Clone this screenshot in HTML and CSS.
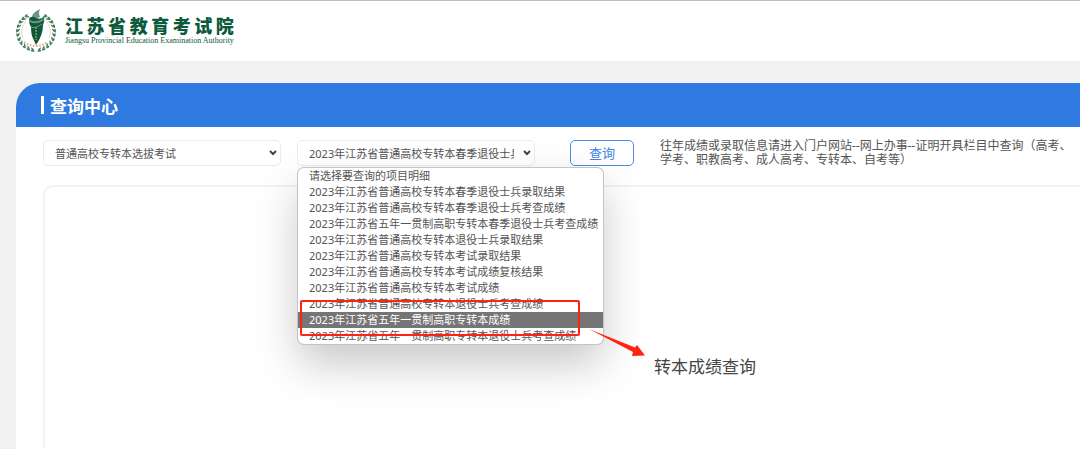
FILE: index.html
```html
<!DOCTYPE html>
<html lang="zh-CN">
  <head>
    <meta charset="UTF-8" />
    <meta name="viewport" content="width=device-width, initial-scale=1.0" />
    <title>江苏省教育考试院 - 查询中心</title>
    <link rel="stylesheet" href="styles.css">
  </head>
  <body>
    <header class="header">
      <svg class="logo" viewBox="0 0 42 46" aria-hidden="true">
        <defs>
          <g id="leaf" fill="#3f7a60">
            <path d="M21 43.500q-2.600-2.800-4.200-.4q1.800 1.600 4.200.4z" />
            <path d="M21 43.200q-1.400-3-4-3.600q.4 3 4 3.600z" />
          </g>
          <g id="branch">
            <use href="#leaf" transform="rotate(4 21 24)" />
            <use href="#leaf" transform="rotate(18 21 24)" />
            <use href="#leaf" transform="rotate(32 21 24)" />
            <use href="#leaf" transform="rotate(46 21 24)" />
            <use href="#leaf" transform="rotate(60 21 24)" />
            <use href="#leaf" transform="rotate(74 21 24)" />
            <use href="#leaf" transform="rotate(88 21 24)" />
            <use href="#leaf" transform="rotate(102 21 24)" />
            <use href="#leaf" transform="rotate(116 21 24)" />
            <use href="#leaf" transform="rotate(130 21 24)" />
            <use href="#leaf" transform="rotate(143 21 24)" />
          </g>
        </defs>
        <use href="#branch" />
        <use href="#branch" transform="translate(42 0) scale(-1 1)" />
        <path d="M11 13a15 15 0 0 0-3 17M31 13a15 15 0 0 1 3 17" fill="none" stroke="#f0c9a4" stroke-width=".8" />
        <path d="M9 34q12 8 24 0" fill="none" stroke="#e2a06a" stroke-width="1.800" stroke-dasharray="1.600 1.600" />
        <path d="M17 9q0-4 8-8q-2 4 0 8l-4 2z" fill="#6f9483" />
        <path d="M14 11q2-4 7-1q4 2 8-1q1 4-1 8q0 10-7 20l-4-9q-1-4-1-9q-2-3-2-8z" fill="#0b5a3c" />
        <path d="M14 11q5 5 15-1q0 2-1 3q-7 4-13 1z" fill="#6f9483" />
        <path d="M16 19q4 2 11-3" fill="none" stroke="#6f9483" stroke-width="1" />
        <path d="M21 19v13" stroke="#b98d4c" stroke-width="1.500" stroke-dasharray="2 1" />
      </svg>
      <div class="brand">
        <div class="brand-name">江苏省教育考试院</div>
        <div class="brand-en">Jiangsu Provincial Education Examination Authority</div>
      </div>
    </header>

    <main class="panel">
      <h1 class="panel-title">查询中心</h1>

      <form class="toolbar">
        <select class="select" aria-label="考试类别">
          <option>普通高校专转本选拔考试</option>
        </select>

        <div class="picker">
          <select class="select" aria-label="项目明细">
            <option>2023年江苏省普通高校专转本春季退役士兵考查成绩</option>
          </select>
          <ul class="menu" role="listbox" aria-label="项目明细">
            <li role="option">请选择要查询的项目明细</li>
            <li role="option">2023年江苏省普通高校专转本春季退役士兵录取结果</li>
            <li role="option">2023年江苏省普通高校专转本春季退役士兵考查成绩</li>
            <li role="option">2023年江苏省五年一贯制高职专转本春季退役士兵考查成绩</li>
            <li role="option">2023年江苏省普通高校专转本退役士兵录取结果</li>
            <li role="option">2023年江苏省普通高校专转本考试录取结果</li>
            <li role="option">2023年江苏省普通高校专转本考试成绩复核结果</li>
            <li role="option">2023年江苏省普通高校专转本考试成绩</li>
            <li role="option">2023年江苏省普通高校专转本退役士兵考查成绩</li>
            <li role="option" class="active" aria-selected="true">2023年江苏省五年一贯制高职专转本成绩</li>
            <li role="option">2023年江苏省五年一贯制高职专转本退役士兵考查成绩</li>
          </ul>

          <!-- 标注 -->
          <div class="mark"></div>
          <svg class="arrow" viewBox="0 0 56 28" aria-hidden="true">
            <path d="M0 0L46 18.500L48 16L56 26.500L43 27L44 23Z" fill="#ff2412" />
          </svg>
          <div class="caption">转本成绩查询</div>
        </div>

        <button type="button" class="query-btn">查询</button>
        <p class="note">往年成绩或录取信息请进入门户网站--网上办事--证明开具栏目中查询（高考、学考、职教高考、成人高考、专转本、自考等）</p>
      </form>

      <section class="result"></section>
    </main>
  </body>
</html>
```
FILE: styles.css
```css
* {
  box-sizing: border-box;
}
body {
  margin: 0;
  min-height: 100vh;
  display: flex;
  flex-direction: column;
  background-color: #f1f1f1;
  color: #555;
  font-family: "Noto Sans", "Noto Sans CJK SC", sans-serif;
  font-size: 11px;
}

.header {
  display: flex;
  align-items: center;
  gap: 8px;
  height: 61px;
  padding: 0 15px;
  border-top: 1px solid #c8bcbc;
  background-color: #fff;
}
.logo {
  width: 42px;
  height: 46px;
}
.brand {
  color: #0b5a3c;
}
.brand-name {
  font-size: 18px;
  font-weight: 900;
  line-height: 20px;
  text-align-last: justify;
}
.brand-en {
  font-family: "Liberation Serif", serif;
  font-size: 8px;
  line-height: 10px;
}

.panel {
  flex: 1;
  display: flex;
  flex-direction: column;
  margin: 22px 0 0 16px;
  border-top-left-radius: 24px;
  background-color: #fff;
}
.panel-title {
  display: flex;
  align-items: center;
  gap: 6px;
  margin: 0;
  padding: 0 25px;
  height: 44px;
  border-top-left-radius: 24px;
  background-color: #2f7ae0;
  color: #fff;
  font-size: 17px;
}
.panel-title::before {
  content: "";
  width: 3px;
  height: 18px;
  background-color: #fff;
}

.toolbar {
  display: flex;
  align-items: center;
  padding: 12px 0 0 27px;
}
.select {
  flex: none;
  display: block;
  width: 238px;
  height: 26px;
  padding: 0 20px 0 11px;
  border: 1px solid #ebebeb;
  border-radius: 5px;
  appearance: none;
  background: #fff url("data:image/svg+xml,%3Csvg xmlns='http://www.w3.org/2000/svg' width='8' height='6'%3E%3Cpath d='M1 1l3 3 3-3' fill='none' stroke='%23444' stroke-width='2'/%3E%3C/svg%3E") no-repeat right 3px center;
  color: #555;
  font-family: inherit;
  font-size: 11px;
}
.picker {
  flex: none;
  position: relative;
  margin-left: 16px;
}
.menu {
  position: absolute;
  top: 28px;
  left: 1px;
  z-index: 10;
  margin: 0;
  padding: 0;
  min-width: 305px;
  border-radius: 6px;
  background-color: #fff;
  box-shadow: 0 0 0 1px #c4c4c4, 0 20px 44px rgba(0, 0, 0, 0.22);
  list-style: none;
  line-height: 16px;
  white-space: nowrap;
}
.menu li {
  padding: 0 0 0 11px;
}
.menu .active {
  background-color: #757575;
  color: #fff;
}
.mark {
  position: absolute;
  top: 160px;
  left: 3px;
  z-index: 11;
  width: 280px;
  height: 36px;
  border: 2px solid #ff2412;
  border-radius: 2px;
}
.arrow {
  position: absolute;
  top: 189px;
  left: 292px;
  z-index: 11;
  width: 56px;
  height: 28px;
}
.caption {
  position: absolute;
  top: 215px;
  left: 357px;
  z-index: 11;
  color: #444;
  font-size: 17px;
  line-height: 24px;
  white-space: nowrap;
}

.query-btn {
  flex: none;
  width: 64px;
  height: 26px;
  margin-left: 35px;
  padding: 0 0 2px;
  border: 1px solid #4a8be8;
  border-radius: 5px;
  background-color: #fff;
  color: #3f83e6;
  font-family: inherit;
  font-size: 13px;
  cursor: pointer;
}
.note {
  margin: 0 0 0 26px;
  font-size: 12px;
  line-height: 14px;
}

.result {
  flex: 1;
  margin: 18px 0 0 27px;
  border: 2px solid #f3f3f3;
  border-width: 2px 0 0 2px;
  border-top-left-radius: 10px;
}
```
